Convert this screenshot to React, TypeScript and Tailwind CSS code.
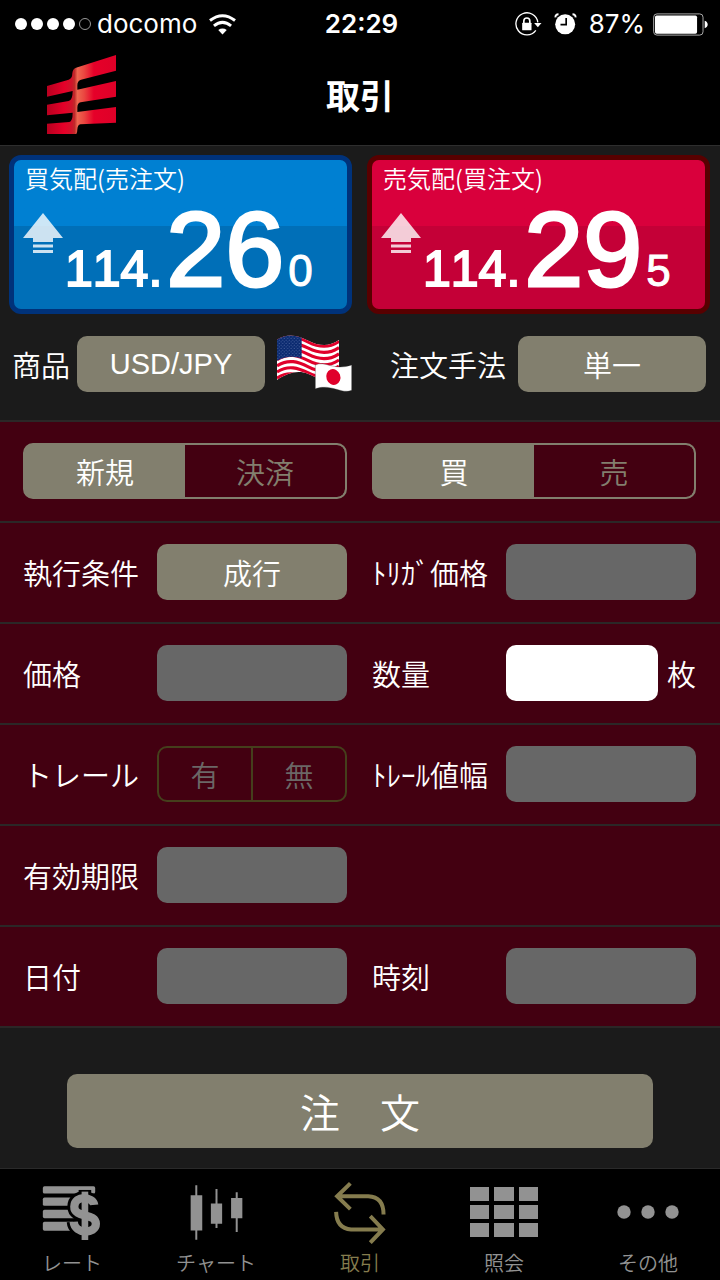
import { useState } from "react";
import type { ReactNode } from "react";
import clsx from "clsx";

type PriceCardProps = {
  title: string;
  base: string;
  main: string;
  sub: string;
  className: string;
};

type SegmentedProps = {
  name: string;
  label: string;
  options: string[];
  initial?: string;
};

type FieldProps = {
  id: string;
  label: string;
  disabled?: boolean;
  unit?: string;
};

const boxStyle = "h-14 min-w-0 flex-1 rounded-[10px]";
const pickerStyle = "h-14 min-w-0 flex-1 rounded-[10px] bg-[#827f6e] text-[29px] leading-10";

function StatusBar() {
  return (
    <div className="flex h-12 items-center pr-3 pl-[15px] font-['Inter','Liberation_Sans',sans-serif] text-[26px]">
      <div className="flex flex-1 items-center">
        <div className="flex gap-1">
          {[1, 2, 3, 4].map((n) => (
            <span key={n} className="size-3 rounded-full bg-white" />
          ))}
          <span className="size-3 rounded-full border border-[#999]" />
        </div>
        <span className="ml-[6px]">docomo</span>
        <svg viewBox="636 38 82 62" className="ml-3 h-[21px] w-[27px]" fill="none" stroke="#fff" strokeWidth="9">
          <path d="M639 57Q677 28 715 57M651 73Q677 52 703 73" />
          <path d="M664 86Q677 77 690 86L677 99Z" fill="#fff" stroke="none" />
        </svg>
      </div>
      <span className="font-semibold">22:29</span>
      <div className="flex flex-1 items-center justify-end">
        <svg viewBox="468 35 80 72" className="h-6 w-[27px]" fill="none" stroke="#fff">
          <path d="M530 90A33 33 0 1 1 536 66" strokeWidth="4" />
          <path d="M525 68H547L536 81Z" fill="#fff" stroke="none" />
          <rect x="489" y="67" width="28" height="23" rx="2" fill="#fff" stroke="none" />
          <path d="M494 70V62Q494 53 503 53T512 62V70" strokeWidth="5" />
        </svg>
        <svg viewBox="589 39 68 66" className="ml-3 h-[22px] w-[23px]">
          <circle cx="622" cy="73" r="30" fill="#fff" />
          <path d="M593 52Q592 43 602 43M653 52Q654 43 644 43" stroke="#fff" strokeWidth="6" fill="none" />
          <path d="M625 54V74H608" stroke="#000" strokeWidth="5" fill="none" />
        </svg>
        <span className="ml-3">87%</span>
        <svg viewBox="876 38 166 68" className="ml-2 h-[23px] w-[55px]">
          <rect x="878" y="40" width="149" height="64" rx="10" fill="none" stroke="#aaa" strokeWidth="3" />
          <rect x="882" y="45" width="127" height="55" rx="5" fill="#fff" />
          <path d="M1032 61Q1041 64 1041 72T1032 83Z" fill="#fff" />
        </svg>
      </div>
    </div>
  );
}

function Logo() {
  return (
    <svg viewBox="141 165 207 237" className="h-[79px] w-[69px]" aria-label="ホーム">
      <defs>
        <linearGradient id="logo" x1="141" x2="348" y1="0" y2="0" gradientUnits="userSpaceOnUse">
          <stop offset="0" stopColor="#b8001f" />
          <stop offset="0.25" stopColor="#e60029" />
          <stop offset="0.36" stopColor="#d0142a" />
          <stop offset="0.4" stopColor="#c02a2a" />
          <stop offset="0.44" stopColor="#ee6650" />
          <stop offset="0.54" stopColor="#ea4640" />
          <stop offset="0.68" stopColor="#e60029" />
          <stop offset="1" stopColor="#de0028" />
        </linearGradient>
      </defs>
      <path
        fill="url(#logo)"
        d="M141 258L206 239Q217 236 217 220Q218 207 228 203L348 165V212L243 239Q232 242 232 256V269L348 243V290L242 307Q232 309 232 323V336L348 321V368L241 373Q233 374 232 388Q232 397 229 402H141V371L208 366Q218 364 218 338L141 346V314L206 303Q218 300 218 273L141 290Z"
      />
    </svg>
  );
}

function Flags() {
  const wave = "C55 5 85 15 115 30S175 50 207 28";
  return (
    <svg viewBox="15 10 234 180" className="mx-[10px] h-[60px] w-[78px] shrink-0" aria-label="アメリカと日本">
      <defs>
        <clipPath id="us">
          <path d={`M21 27${wave}V140C175 162 145 142 115 130S55 125 21 148Z`} />
        </clipPath>
        <pattern id="stars" width="10" height="10" patternUnits="userSpaceOnUse">
          <circle cx="3" cy="3" r="1.3" fill="#7f92c4" />
          <circle cx="8" cy="8" r="1.3" fill="#7f92c4" />
        </pattern>
      </defs>
      <g clipPath="url(#us)">
        <rect x="15" y="5" width="200" height="160" fill="#fff" />
        {[0, 2, 4, 6, 8, 10, 12].map((n) => (
          <path
            key={n}
            d={`M21 27${wave}`}
            transform={`translate(0 ${n * 9.3 + 4})`}
            fill="none"
            stroke="#e0002b"
            strokeWidth="9.5"
          />
        ))}
        <path d="M21 0H95V83Q58 70 21 90Z" fill="#0b2a70" />
        <path d="M21 0H95V83Q58 70 21 90Z" fill="url(#stars)" />
      </g>
      <path d="M136 103C165 88 190 122 245 103V179C215 192 185 158 136 174Z" fill="#fff" stroke="#333" strokeWidth="1" />
      <ellipse cx="190" cy="139" rx="21" ry="24" transform="rotate(-20 190 139)" fill="#e0002b" />
    </svg>
  );
}

function PriceCard({ title, base, main, sub, className }: PriceCardProps) {
  return (
    <button
      type="button"
      className={clsx("flex h-[159px] flex-col items-start rounded-[12px] border-[5px] pl-[11px] text-left", className)}
    >
      <span className="text-[24px] leading-9">{title}</span>
      <span className="flex items-start">
        <svg viewBox="0 0 40 40" className="mt-[17px] -ml-[2px] size-10" fill="#fff" fillOpacity="0.8">
          <path d="M20 0L40 25H30V29H10V25H0ZM10 31.5H30V34.5H10ZM10 37H30V40H10Z" />
        </svg>
        <span className="ml-[2px] flex items-baseline font-['Liberation_Sans',Arial,sans-serif] leading-[106px] [font-kerning:none]">
          <span className="text-[50px] [-webkit-text-stroke:2px_white]">{base}</span>
          <span className="ml-1 text-[106px] [-webkit-text-stroke:3px_white]">{main}</span>
          <span className="ml-1 text-[44px] [-webkit-text-stroke:1px_white]">{sub}</span>
        </span>
      </span>
    </button>
  );
}

function Segmented({ name, label, options, initial }: SegmentedProps) {
  const [value, setValue] = useState(initial);
  return (
    <div
      role="radiogroup"
      aria-label={label}
      className="flex h-14 overflow-hidden rounded-[10px] border-2 border-[#827f6e] bg-[#827f6e]"
    >
      {options.map((option) => (
        <label
          key={option}
          className={clsx(
            "flex flex-1 items-center justify-center last:rounded-r-[8px]",
            value === option ? "bg-[#827f6e] text-white" : "bg-[#430011] text-[#827f6e]",
          )}
        >
          <input
            type="radio"
            name={name}
            className="sr-only"
            checked={value === option}
            onChange={() => setValue(option)}
          />
          {option}
        </label>
      ))}
    </div>
  );
}

function Field({ id, label, disabled = true, unit }: FieldProps) {
  return (
    <div className="flex items-center">
      <label htmlFor={id} className="w-[134px] shrink-0">
        {label}
      </label>
      <input
        id={id}
        type="text"
        disabled={disabled}
        className={clsx(boxStyle, "px-3 text-black", disabled ? "bg-[#676767]" : "bg-white")}
      />
      {unit && <span className="ml-[9px]">{unit}</span>}
    </div>
  );
}

function Row({ children }: { children: ReactNode }) {
  return (
    <div className="grid grid-cols-2 gap-[25px] border-b-2 border-[#2b2727] pt-[21px] pr-6 pb-[22px] pl-[23px]">
      {children}
    </div>
  );
}

function RateIcon() {
  return (
    <svg viewBox="128 70 180 172" className="h-[57px] w-[60px]">
      <g fill="#929292">
        <rect x="130" y="77" width="158" height="22" rx="5" />
        <rect x="130" y="111" width="95" height="25" rx="5" />
        <rect x="130" y="148" width="105" height="25" rx="5" />
        <rect x="130" y="184" width="95" height="27" rx="5" />
      </g>
      <g fill="none">
        <g stroke="#000" strokeWidth="42">
          <path d="M285 133C282 108 226 102 225 138C224 174 290 156 290 190C290 222 226 222 223 184" />
          <path d="M257 88V238" strokeWidth="38" />
        </g>
        <g stroke="#929292" strokeWidth="25">
          <path d="M285 133C282 108 226 102 225 138C224 174 290 156 290 190C290 222 226 222 223 184" />
          <path d="M257 93V239" strokeWidth="20" />
        </g>
      </g>
    </svg>
  );
}

function ChartIcon() {
  return (
    <svg viewBox="567 71 158 166" className="h-[55px] w-[53px]" fill="#929292">
      <path d="M568 102H603V208H568ZM582 72H588V236H582ZM629 127H663V188H629ZM643 83H649V201H643ZM690 110H724V171H690ZM704 93H710V213H704Z" />
    </svg>
  );
}

function TradeIcon() {
  return (
    <svg viewBox="34 28 162 190" className="h-[63px] w-[54px]" fill="none" stroke="#857c4e" strokeWidth="12">
      <path d="M86 35L46 74L86 113M46 74H140Q186 76 186 129M146 134L184 174L146 214M184 174H88Q44 170 43 121" />
    </svg>
  );
}

function GridIcon() {
  return (
    <svg viewBox="0 0 68 50" className="h-[50px] w-[68px]" fill="#929292">
      {[0, 18, 36].map((y) => (
        <path key={y} d={`M0 ${y}h19v14H0ZM24 ${y}h20v14H24ZM49 ${y}h19v14H49Z`} />
      ))}
    </svg>
  );
}

function MoreIcon() {
  return (
    <svg viewBox="0 0 62 14" className="h-[14px] w-[62px]" fill="#929292">
      <circle cx="7" cy="7" r="6.7" />
      <circle cx="31" cy="7" r="6.7" />
      <circle cx="55" cy="7" r="6.7" />
    </svg>
  );
}

const tabs = [
  { label: "レート", icon: <RateIcon /> },
  { label: "チャート", icon: <ChartIcon /> },
  { label: "取引", icon: <TradeIcon />, active: true },
  { label: "照会", icon: <GridIcon /> },
  { label: "その他", icon: <MoreIcon /> },
];

export default function App() {
  return (
    <div className="flex min-h-screen flex-col bg-[#1b1b1b] font-['Noto_Sans_CJK_JP',sans-serif] text-[29px] leading-10 font-[350] text-white">
      <header className="border-b border-[#2e2e2e] bg-black font-normal">
        <StatusBar />
        <div className="grid h-[97px] grid-cols-3 items-center pb-1">
          <a href="#home" className="ml-[47px]">
            <Logo />
          </a>
          <h1 className="text-center text-[34px] font-bold">取引</h1>
        </div>
      </header>

      <main className="flex flex-1 flex-col">
        <div className="grid grid-cols-2 gap-[15px] pt-[9px] pr-[10px] pl-[9px]">
          <PriceCard
            title="買気配(売注文)"
            base="114."
            main="26"
            sub="0"
            className="border-[#00327a] bg-linear-to-b from-[#0080d2] from-44% to-[#006fb8] to-44%"
          />
          <PriceCard
            title="売気配(買注文)"
            base="114."
            main="29"
            sub="5"
            className="border-[#580000] bg-linear-to-b from-[#d9003c] from-44% to-[#c40037] to-44%"
          />
        </div>

        <div className="flex items-center pt-5 pr-[14px] pb-[26px] pl-3">
          <span className="w-[65px] shrink-0">商品</span>
          <button type="button" className={clsx(pickerStyle, "font-['Liberation_Sans',Arial,sans-serif]")}>
            USD/JPY
          </button>
          <Flags />
          <span className="ml-[27px] w-[128px] shrink-0">注文手法</span>
          <button type="button" className={pickerStyle}>
            単一
          </button>
        </div>

        <form className="border-t-2 border-[#2b2727] bg-[#430011]">
          <Row>
            <Segmented name="kind" label="新規・決済" options={["新規", "決済"]} initial="新規" />
            <Segmented name="side" label="売買" options={["買", "売"]} initial="買" />
          </Row>
          <Row>
            <div className="flex items-center">
              <span className="w-[134px] shrink-0">執行条件</span>
              <button type="button" className={pickerStyle}>
                成行
              </button>
            </div>
            <Field id="trigger" label="ﾄﾘｶﾞ価格" />
          </Row>
          <Row>
            <Field id="price" label="価格" />
            <Field id="amount" label="数量" disabled={false} unit="枚" />
          </Row>
          <Row>
            <div className="flex items-center">
              <span className="w-[134px] shrink-0">トレール</span>
              <div
                role="radiogroup"
                aria-label="トレール"
                className="flex h-14 flex-1 divide-x-2 divide-[#453f1c] rounded-[10px] border-2 border-[#453f1c] text-[#6b6766]"
              >
                {["有", "無"].map((option) => (
                  <label key={option} className="flex flex-1 items-center justify-center">
                    <input type="radio" name="trail" disabled className="sr-only" />
                    {option}
                  </label>
                ))}
              </div>
            </div>
            <Field id="trailWidth" label="ﾄﾚｰﾙ値幅" />
          </Row>
          <Row>
            <Field id="expire" label="有効期限" />
          </Row>
          <Row>
            <Field id="date" label="日付" />
            <Field id="time" label="時刻" />
          </Row>
        </form>

        <div className="px-[67px] pt-[46px] pb-5">
          <button type="button" className="h-[74px] w-full rounded-[10px] bg-[#827f6e] text-[40px] leading-10">
            注　文
          </button>
        </div>
      </main>

      <nav className="grid h-[112px] grid-cols-5 border-t border-[#2a2a2a] bg-black">
        {tabs.map(({ label, icon, active }) => (
          <a
            key={label}
            href={`#${label}`}
            className={clsx(
              "flex flex-col items-center pt-[10px] text-[20px] leading-6",
              active ? "text-[#857c4e]" : "text-[#929292]",
            )}
          >
            <span className="flex h-[66px] items-center">{icon}</span>
            <span className="mt-[6px]">{label}</span>
          </a>
        ))}
      </nav>
    </div>
  );
}
